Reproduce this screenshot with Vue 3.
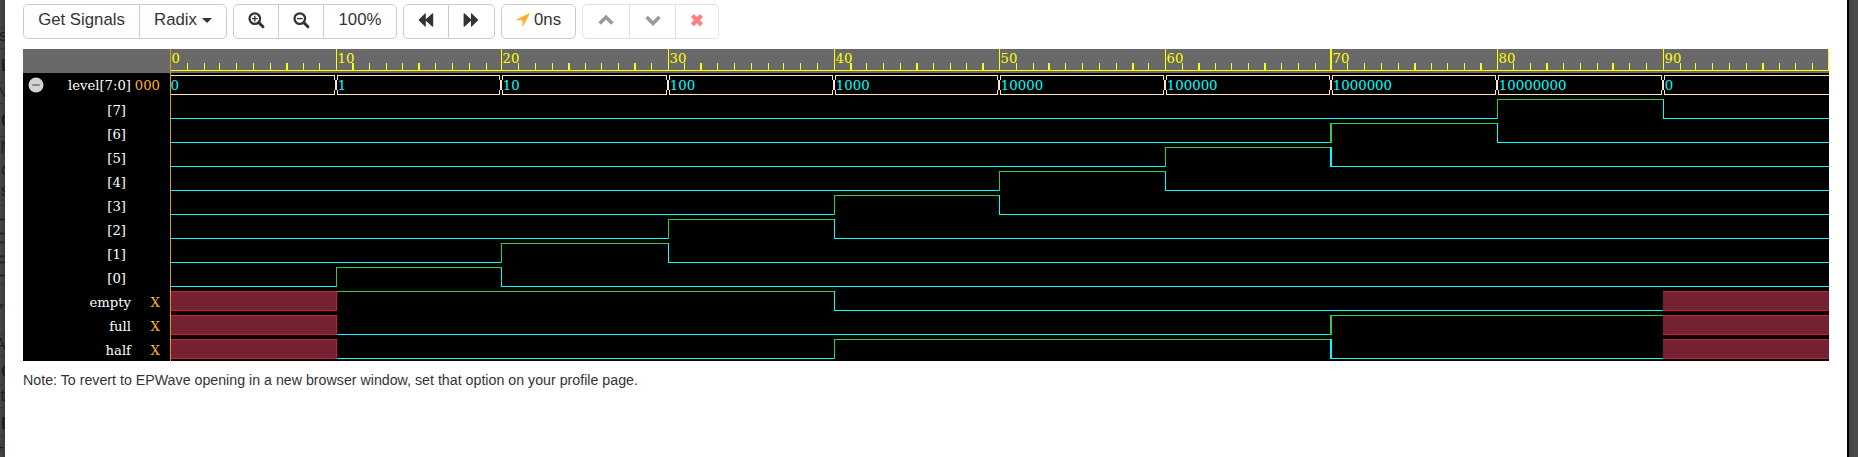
<script setup>
const decades = [170, 336, 501, 668, 834, 999, 1165, 1331, 1497, 1663]
const END = 1829
const wide = new Set([
  286, 352, 418, 568, 634, 700, 850, 916, 982, 1048, 1132, 1198, 1264, 1330,
  1414, 1480, 1546, 1612, 1762,
])
const minor = [
  187, 204, 219, 236, 253, 270, 286, 303, 319,
  352, 369, 386, 402, 418, 435, 452, 469, 486,
  518, 535, 552, 568, 585, 601, 618, 634, 651,
  684, 700, 717, 734, 751, 768, 783, 800, 817,
  850, 866, 883, 900, 916, 933, 950, 966, 982,
  1016, 1033, 1048, 1065, 1082, 1099, 1116, 1132, 1148,
  1182, 1198, 1215, 1231, 1248, 1264, 1281, 1298, 1315,
  1347, 1364, 1381, 1398, 1414, 1431, 1447, 1464, 1480,
  1513, 1530, 1546, 1563, 1580, 1597, 1612, 1629, 1646,
  1680, 1695, 1712, 1729, 1746, 1762, 1779, 1795, 1812,
].map((x) => ({ x, w: wide.has(x) ? 2 : 1 }))
const edge = (x) => (x === 1331 ? { x: 1330, w: 2 } : { x, w: 1 })
const major = [...decades.map(edge), { x: 1828, w: 1 }]

const busValues = ['0', '1', '10', '100', '1000', '10000', '100000', '1000000', '10000000', '0']
const busPaths = decades.map((x, i) => {
  const next = decades[i + 1]
  const left = i === 0 ? 'M169 94.5V75.5' : `M${x + 1.5} 94.5V91.5L${x + 0.3} 88.5V81.5L${x + 1.5} 78.5V75.5`
  const right = next
    ? `H${next - 1.5}V78.5L${next - 0.3} 81.5V88.5L${next - 1.5} 91.5V94.5`
    : `H${END + 2}V94.5`
  return `${left}${right}Z`
})

// One character per ten time units: 0, 1 or x.
const signals = [
  { name: '[7]', wave: '0000000010' },
  { name: '[6]', wave: '0000000100' },
  { name: '[5]', wave: '0000001000' },
  { name: '[4]', wave: '0000010000' },
  { name: '[3]', wave: '0000100000' },
  { name: '[2]', wave: '0001000000' },
  { name: '[1]', wave: '0010000000' },
  { name: '[0]', wave: '0100000000' },
  { name: 'empty', value: 'X', wave: 'x11100000x' },
  { name: 'full', value: 'X', wave: 'x00000011x' },
  { name: 'half', value: 'X', wave: 'x00011100x' },
]
const bars = []
const unknowns = []
signals.forEach((s, r) => {
  const top = 99 + r * 24
  ;[...s.wave].forEach((v, i) => {
    const x = decades[i]
    const stop = decades[i + 1] ?? END
    if (v === 'x') {
      unknowns.push({ x, y: top, w: stop - x + (i === 0 ? 1 : 0), last: i > 0 })
      return
    }
    const start = s.wave[i - 1] === 'x' ? x + 1 : x
    bars.push({ x: start, y: v === '1' ? top : top + 19, w: stop - start, h: 1, c: v })
    if (i > 0 && s.wave[i - 1] !== v && s.wave[i - 1] !== 'x') {
      const e = edge(x)
      bars.push({ x: e.x, y: top, w: e.w, h: 20, c: v })
    }
  })
})

// Slice of the page that stays visible beside the dialog.
const rules = [27, 48, 82, 103, 136, 205, 284, 334, 355, 384, 407, 436]
const frames = [219, 233, 242, 256, 262, 275]
const letters = [
  { t: 's', x: -1, y: 41 },
  { t: 'L', x: 1, y: 71, b: true },
  { t: 'N', x: -4, y: 97 },
  { t: 'C', x: 1, y: 126, b: true },
  { t: 'N', x: 0.5, y: 153 },
  { t: 'c', x: 1, y: 175 },
  { t: 's', x: 1, y: 196 },
  { t: 'A', x: -5, y: 350 },
  { t: 'C', x: 1, y: 377, b: true },
  { t: 't', x: 0.5, y: 401 },
  { t: 'L', x: 1, y: 429, b: true },
  { t: '+', x: -5, y: 453 },
]
</script>

<template>
  <div class="page">
    <svg class="behind left" width="5" height="457" viewBox="0 0 5 457" aria-hidden="true">
      <rect v-for="y in rules" :key="y" x="0" :y="y" width="5" height="1" fill="#363636" />
      <rect v-for="y in frames" :key="y" x="0" :y="y - 0.5" width="5" height="2" fill="#232528" />
      <path d="M0 304H4.5L1 309L0 308Z" fill="#1b3443" />
      <text v-for="l in letters" :key="l.y" :x="l.x" :y="l.y" class="letter" :class="{ bold: l.b }">{{ l.t }}</text>
    </svg>
    <main class="dialog">
      <div class="toolbar">
        <div class="group">
          <button class="btn w117">Get Signals</button>
          <button class="btn w88">Radix<i class="caret"></i></button>
        </div>
        <div class="group">
          <button class="btn w46">
            <svg width="17" height="16" viewBox="0 0 17 16">
              <circle cx="6.8" cy="6.6" r="5.3" class="lens" />
              <path d="M10.8 10.6L15 14.7" class="handle" />
              <path d="M4 6.6H9.6M6.8 3.8V9.4" class="sign" />
            </svg>
          </button>
          <button class="btn w46">
            <svg width="17" height="16" viewBox="0 0 17 16">
              <circle cx="6.8" cy="6.6" r="5.3" class="lens" />
              <path d="M10.8 10.6L15 14.7" class="handle" />
              <path d="M4 6.6H9.6" class="sign" />
            </svg>
          </button>
          <button class="btn w74">100%</button>
        </div>
        <div class="group">
          <button class="btn w46">
            <svg width="16" height="14" viewBox="0 0 16 14">
              <path d="M0.4 7L7 0.5Q7.8 0 7.8 1V6.2L14.2 0.5Q15.2 0 15.2 1V13Q15.2 14 14.2 13.5L7.8 7.8V13Q7.8 14 7 13.5Z" />
            </svg>
          </button>
          <button class="btn w47">
            <svg class="forward" width="16" height="14" viewBox="0 0 16 14">
              <path d="M15.4 7L8.8 0.5Q8 0 8 1V6.2L1.6 0.5Q0.6 0 0.6 1V13Q0.6 14 1.6 13.5L8 7.8V13Q8 14 8.8 13.5Z" />
            </svg>
          </button>
        </div>
        <div class="group">
          <button class="btn w75">
            <svg class="arrow" width="14" height="14" viewBox="0 0 14 14">
              <path d="M13.2 0.2Q13.8 0.4 13.5 1L7.4 13.1Q6.6 13.9 6.5 12.8V7.3H1Q-0.1 7.1 0.7 6.4L12.8 0.3Z" />
            </svg>
            <span>0ns</span>
          </button>
        </div>
        <div class="group disabled">
          <button class="btn w48">
            <svg width="16" height="12" viewBox="0 0 16 12">
              <path d="M1.6 9.6L8 3.2L14.4 9.6" class="chev" />
            </svg>
          </button>
          <button class="btn w47">
            <svg width="16" height="12" viewBox="0 0 16 12">
              <path d="M1.6 3L8 9.4L14.4 3" class="chev" />
            </svg>
          </button>
          <button class="btn w44">
            <svg width="14" height="12" viewBox="0 0 14 12">
              <path d="M2.4 1.5L11.6 10.7M11.6 1.5L2.4 10.7" class="cross" />
            </svg>
          </button>
        </div>
      </div>

      <section class="viewer">
        <div class="names">
          <div class="corner"></div>
          <div class="row">
            <svg class="collapse" width="16" height="16" viewBox="0 0 16 16">
              <circle cx="8" cy="8" r="7.5" fill="#d3d3d3" />
              <path d="M4.2 8H11.8" stroke="#808080" stroke-width="1.8" />
            </svg>
            <span class="name">level[7:0]</span>
            <span class="value">000</span>
          </div>
          <div v-for="s in signals" :key="s.name" class="row">
            <span class="name" :class="{ bit: !s.value }">{{ s.name }}</span>
            <span class="value">{{ s.value }}</span>
          </div>
        </div>
        <svg class="waves" width="1659" height="312" viewBox="170 49 1659 312">
          <rect x="170" y="49" width="1659" height="24" fill="#696969" />
          <g fill="#ff0" shape-rendering="crispEdges">
            <rect x="170" y="70" width="1659" height="1" />
            <rect v-for="t in minor" :key="t.x" :x="t.x" y="63" :width="t.w" height="7" />
            <rect v-for="t in major" :key="t.x" :x="t.x" y="49" :width="t.w" height="22" />
          </g>
          <text v-for="(x, i) in decades" :key="x" :x="x + 1.5" y="63" class="time">{{ i * 10 || '0' }}</text>
          <path v-for="(d, i) in busPaths" :key="i" :d="d" class="bus" />
          <text v-for="(x, i) in decades" :key="x" :x="i ? x + 1.8 : x + 0.5" y="90" class="bus-value">{{ busValues[i] }}</text>
          <g shape-rendering="crispEdges">
            <rect
              v-for="(b, i) in bars" :key="i"
              :x="b.x" :y="b.y" :width="b.w" :height="b.h"
              :class="b.c === '1' ? 'high' : 'low'"
            />
            <g v-for="(u, i) in unknowns" :key="i">
              <rect :x="u.x" :y="u.y" :width="u.w" height="20" fill="#dc143c" />
              <rect :x="u.x" :y="u.y + 1" :width="u.last ? u.w : u.w - 1" height="18" fill="#742232" />
            </g>
            <rect x="170" y="49" width="1" height="312" fill="#e09a2b" />
          </g>
        </svg>
      </section>

      <p class="note">Note: To revert to EPWave opening in a new browser window, set that option on your profile page.</p>
    </main>
    <div class="behind right"></div>
  </div>
</template>

<style>
body {
  margin: 0;
  background: #4b4b4b;
}
</style>

<style scoped>
.page {
  display: flex;
  width: 1858px;
  height: 457px;
  overflow: hidden;
  font-family: "Liberation Sans", Arial, sans-serif;
  color: #333;
}
.behind.left {
  flex: none;
  overflow: hidden;
  background: linear-gradient(to right, #474747, #3a3a3a);
}
.letter {
  font-size: 16px;
  fill: #1c1c1c;
}
.letter.bold {
  font-weight: bold;
}
.behind.right {
  flex: 1;
  border-left: 2px solid #000;
  background: linear-gradient(to right, #404040, #4b4b4b 4px);
}
.dialog {
  box-sizing: border-box;
  width: 1842px;
  padding: 4px 18px 0;
  background: #fff;
}
.toolbar {
  display: flex;
  gap: 6px;
  height: 45px;
  align-items: flex-start;
}
.group {
  display: flex;
}
.btn {
  box-sizing: border-box;
  display: flex;
  align-items: center;
  justify-content: center;
  height: 35px;
  margin: 0;
  padding: 0 0 4px;
  border: 1px solid #ccc;
  background: #fff;
  color: #333;
  font: 16.8px/24px "Liberation Sans", Arial, sans-serif;
  white-space: nowrap;
}
.btn svg {
  fill: #333;
  overflow: visible;
}
.btn + .btn {
  margin-left: -1px;
}
.btn:first-child {
  border-top-left-radius: 5px;
  border-bottom-left-radius: 5px;
}
.btn:last-child {
  border-top-right-radius: 5px;
  border-bottom-right-radius: 5px;
}
.disabled .btn {
  border-color: #e2e2e2;
}
.w117 { width: 117px; }
.w88 { width: 88px; }
.w75 { width: 75px; }
.w74 { width: 74px; }
.w48 { width: 48px; }
.w47 { width: 47px; }
.w46 { width: 46px; }
.w44 { width: 44px; }
.caret {
  margin: 1px 0 0 5px;
  border: 5px solid transparent;
  border-top-color: #333;
  border-bottom: 0;
}
.lens {
  fill: none;
  stroke: #333;
  stroke-width: 2.2;
}
.handle {
  stroke: #333;
  stroke-width: 3;
  stroke-linecap: round;
}
.sign {
  stroke: #333;
  stroke-width: 1.4;
}
.btn .forward {
  margin-right: 2px;
}
.btn .arrow {
  margin-right: 4px;
  fill: #ffb033;
}
.chev {
  fill: none;
  stroke: #999;
  stroke-width: 3.6;
}
.cross {
  fill: none;
  stroke: #ff8080;
  stroke-width: 4.2;
}
.viewer {
  display: flex;
  width: 1806px;
  height: 312px;
  background: #000;
  font-family: "DejaVu Serif", serif;
  font-size: 13.2px;
}
.names {
  width: 147px;
}
.corner {
  height: 24px;
  background: #696969;
}
.row {
  display: flex;
  align-items: center;
  height: 24px;
  line-height: 24px;
}
.collapse {
  flex: none;
  margin-left: 5px;
  margin-right: -21px;
}
.name {
  width: 108px;
  padding-top: 3px;
  text-align: right;
  color: #fff;
  white-space: nowrap;
}
.row:nth-child(2) .name,
.row:nth-child(2) .value {
  padding-top: 2px;
}
.name.bit {
  width: 103px;
  margin-right: 5px;
}
.value {
  width: 29px;
  padding-top: 3px;
  text-align: right;
  color: #ffae35;
}
.waves {
  display: block;
}
.time {
  fill: #ff0;
}
.bus {
  fill: none;
  stroke: #ffe4c4;
  stroke-width: 1;
  shape-rendering: crispEdges;
}
.bus-value {
  fill: #0ff;
  font-size: 13.3px;
}
.high {
  fill: #32cd32;
}
.low {
  fill: #0ff;
}
.note {
  margin: 7px 0 0;
  font-size: 14.23px;
  line-height: 24px;
}
</style>
